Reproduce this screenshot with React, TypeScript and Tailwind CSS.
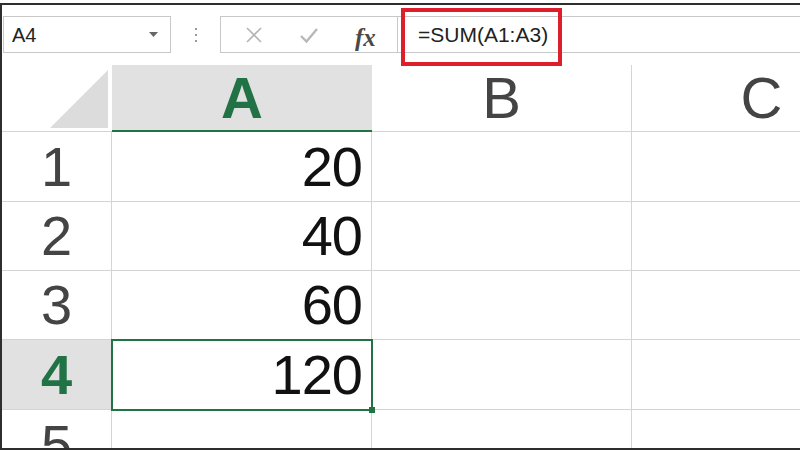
import React from "react";

const font = "font-['Liberation_Sans',Arial,sans-serif]";

function RowHeader({ n, selected }: { n: number; selected?: boolean }) {
  return (
    <div
      className={`flex items-center justify-center border-r border-b border-[#d4d4d4] text-[56px] leading-none ${
        selected ? "bg-[#e1e1e1] text-[#217346] font-bold" : "text-[#444444]"
      }`}
    >
      {n}
    </div>
  );
}

function Cell({ v, selected }: { v?: string; selected?: boolean }) {
  return (
    <div className="relative flex items-center justify-end pr-[9px] border-r border-b border-[#d4d4d4] text-[56px] leading-none tracking-[-1px] text-[#111111]">
      {v}
      {selected && (
        <div className="absolute top-[-1px] left-[-1px] w-[262px] h-[72px] border-2 border-[#217346] z-10">
          <div className="absolute right-[-4px] bottom-[-4px] w-[6px] h-[6px] bg-[#217346]" />
        </div>
      )}
    </div>
  );
}

export default function App() {
  const rows: { n: number; v: string }[] = [
    { n: 1, v: "20" },
    { n: 2, v: "40" },
    { n: 3, v: "60" },
    { n: 4, v: "120" },
    { n: 5, v: "" },
  ];
  return (
    <div className={`relative w-[800px] h-[450px] bg-white overflow-hidden pt-[3px] ${font}`}>
      <div className="h-full border-l-2 border-t-2 border-b-2 border-[#2e2e2e] flex flex-col overflow-hidden">
        {/* toolbar */}
        <div className="h-[60px] shrink-0 flex items-start pt-[11px]">
          <div className="ml-[1px] w-[168px] h-[37px] border border-[#c8c8c8] flex items-center justify-between pl-[8px] pr-[12px]">
            <span className="text-[20px] text-[#222222]">A4</span>
            <svg width="9" height="5" viewBox="0 0 9 5">
              <path d="M0 0 H9 L4.5 5 Z" fill="#666666" />
            </svg>
          </div>
          <div className="w-[49px] h-[37px] flex flex-col items-center justify-center gap-[4px]">
            <div className="w-[2px] h-[2px] bg-[#9a9a9a]" />
            <div className="w-[2px] h-[2px] bg-[#9a9a9a]" />
            <div className="w-[2px] h-[2px] bg-[#9a9a9a]" />
          </div>
          <div className="relative w-[178px] h-[37px] border border-[#c8c8c8]">
            <svg className="absolute left-[24px] top-[9px]" width="18" height="18" viewBox="0 0 18 18">
              <path d="M2 2 L16 16 M16 2 L2 16" stroke="#b4b4b4" strokeWidth="1.6" fill="none" />
            </svg>
            <svg className="absolute left-[78px] top-[9px]" width="20" height="18" viewBox="0 0 20 18">
              <path d="M2 10 L7.5 15.5 L18 3" stroke="#b8b8b8" strokeWidth="2.4" fill="none" />
            </svg>
            <span className="absolute left-[134px] top-[2px] font-['Liberation_Serif',serif] italic font-bold text-[25px] text-[#4a4a4a]">
              fx
            </span>
          </div>
          <div className="flex-1 h-[37px] border-t border-b border-[#c8c8c8] flex items-center pl-[20px]">
            <span className="text-[21px] text-[#222222]">=SUM(A1:A3)</span>
          </div>
        </div>

        {/* grid */}
        <div className="grid grid-cols-[110px_260px_260px_260px] grid-rows-[67px_70px_69px_69px_70px_70px]">
          <div className="relative border-b border-[#d4d4d4]">
            <svg className="absolute left-[48px] top-[5px]" width="60" height="59" viewBox="0 0 60 59">
              <path d="M0 58 L58 58 L58 0 Z" fill="#dcdcdc" />
            </svg>
          </div>
          <div className="bg-[#e1e1e1] border-b-2 border-[#217346] flex items-center justify-center text-[58px] leading-none font-bold text-[#217346]">
            A
          </div>
          <div className="border-r border-b border-[#d4d4d4] flex items-center justify-center text-[58px] leading-none text-[#444444]">
            B
          </div>
          <div className="border-r border-b border-[#d4d4d4] flex items-center justify-center text-[58px] leading-none text-[#444444]">
            C
          </div>
          {rows.map((r) => (
            <React.Fragment key={r.n}>
              <RowHeader n={r.n} selected={r.n === 4} />
              <Cell v={r.v} selected={r.n === 4} />
              <Cell />
              <Cell />
            </React.Fragment>
          ))}
        </div>
      </div>

      {/* annotation box */}
      <div className="absolute left-[401px] top-[8px] w-[161px] h-[58px] border-[4px] border-[#dc1f2b]" />
    </div>
  );
}
